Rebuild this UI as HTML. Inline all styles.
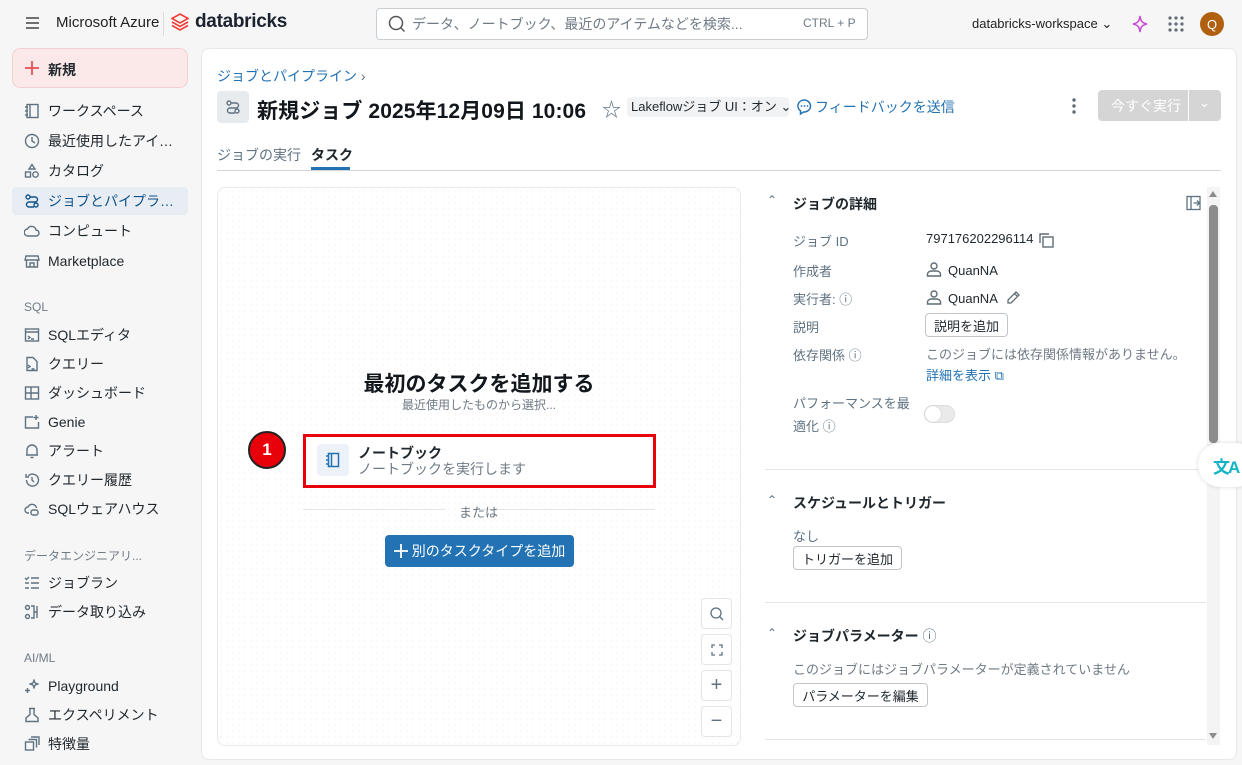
<!DOCTYPE html>
<html><head><meta charset="utf-8"><style>
*{box-sizing:border-box;margin:0;padding:0}
body{width:1242px;height:765px;overflow:hidden;background:#f6f6f6;font-family:"Liberation Sans","Noto Sans CJK JP",sans-serif;color:#1f272d;font-size:14px;position:relative}
.a{position:absolute;white-space:nowrap}
.nav{position:absolute;left:12px;width:176px;height:28px;display:flex;align-items:center;padding-left:12px;font-size:14px;white-space:nowrap}
.nav span{overflow:hidden;text-overflow:ellipsis;white-space:nowrap;max-width:128px}
.nav svg{width:16px;height:16px;margin-right:8px;flex:none;stroke:#5f7281;fill:none;stroke-width:1.4}
.lbl{position:absolute;left:24px;font-size:12px;color:#6f7a85}
.btn{position:absolute;border:1px solid #c0c5ca;border-radius:4px;background:#fff;font-size:13px;display:flex;align-items:center;justify-content:center}
.grey{color:#5f7281}
.ctl{position:absolute;left:701px;width:31px;height:31px;border:1px solid #e3e6e9;border-radius:4px;background:#fff;display:flex;align-items:center;justify-content:center;color:#5f7281}
</style></head><body>
<!-- top bar -->
<svg class="a" style="left:25px;top:16px" width="15" height="14"><path d="M1 2h13M1 7h13M1 12h13" stroke="#444" stroke-width="1.5"/></svg>
<div class="a" style="left:56px;top:14px;font-size:15px;color:#222">Microsoft Azure</div>
<div class="a" style="left:163px;top:12px;width:1px;height:24px;background:#ddd"></div>
<svg class="a" style="left:171px;top:13px" width="18" height="20" viewBox="0 0 18 20"><path d="M9 1L17 5.5 9 10 1 5.5zM1 9l8 4.5 8-4.5M1 12.5l8 4.5 8-4.5" fill="none" stroke="#ef3e36" stroke-width="1.6"/></svg>
<div class="a" style="left:195px;top:11px;font-size:19px;font-weight:bold;color:#1b2331;letter-spacing:-0.3px">databricks</div>
<div class="a" style="left:376px;top:8px;width:492px;height:32px;border:1px solid #c8cdd2;border-radius:4px;background:#fff"></div>
<svg class="a" style="left:388px;top:15px" width="18" height="18"><circle cx="8" cy="8" r="6.5" fill="none" stroke="#555" stroke-width="1.5"/><path d="M12.5 12.5L16.5 16.5" stroke="#555" stroke-width="1.5"/></svg>
<div class="a" style="left:412px;top:14px;font-size:14px;color:#6f7a85">データ、ノートブック、最近のアイテムなどを検索...</div>
<div class="a" style="left:803px;top:16px;font-size:12px;color:#6f7a85">CTRL + P</div>
<div class="a" style="left:972px;top:16px;font-size:13px;color:#222">databricks-workspace ⌄</div>
<svg class="a" style="left:1132px;top:15px" width="16" height="18"><path d="M8 1C8.6 6 10 8 15 9 10 10 8.6 12 8 17 7.4 12 6 10 1 9 6 8 7.4 6 8 1z" fill="none" stroke="#c94fd6" stroke-width="1.6"/></svg>
<svg class="a" style="left:1168px;top:16px" width="16" height="16" fill="#5f6b75"><circle cx="2" cy="2" r="1.6"/><circle cx="8" cy="2" r="1.6"/><circle cx="14" cy="2" r="1.6"/><circle cx="2" cy="8" r="1.6"/><circle cx="8" cy="8" r="1.6"/><circle cx="14" cy="8" r="1.6"/><circle cx="2" cy="14" r="1.6"/><circle cx="8" cy="14" r="1.6"/><circle cx="14" cy="14" r="1.6"/></svg>
<div class="a" style="left:1200px;top:12px;width:24px;height:24px;border-radius:50%;background:#b0600f;color:#fff;font-size:13px;display:flex;align-items:center;justify-content:center">Q</div>

<!-- sidebar -->
<div class="a" style="left:12px;top:48px;width:176px;height:40px;background:#fbe9e9;border:1px solid #f4cfcf;border-radius:8px"></div>
<svg class="a" style="left:24px;top:60px" width="16" height="16"><path d="M8 1v14M1 8h14" stroke="#e34c4c" stroke-width="1.7"/></svg>
<div class="a" style="left:48px;top:60px;font-size:14px;font-weight:bold">新規</div>
<div class="nav" style="top:97px"><svg viewBox="0 0 16 16"><rect x="3" y="1.5" width="11" height="13"/><path d="M6 1.5v13M1 4h3M1 8h3M1 12h3"/></svg><span>ワークスペース</span></div>
<div class="nav" style="top:127px"><svg viewBox="0 0 16 16"><circle cx="8" cy="8" r="6.5"/><path d="M8 4v4l3 2"/></svg><span>最近使用したアイテム</span></div>
<div class="nav" style="top:157px"><svg viewBox="0 0 16 16"><path d="M8 1.5l3 4.5H5z"/><rect x="1.5" y="9" width="5" height="5"/><circle cx="11.5" cy="11.5" r="2.7"/></svg><span>カタログ</span></div>
<div class="nav" style="top:187px;background:#e8ecf3;border-radius:4px;color:#0e538b"><svg viewBox="0 0 16 16" style="stroke:#0e538b"><circle cx="4" cy="4" r="2"/><circle cx="12" cy="12" r="2"/><path d="M6 4h5a2.5 2.5 0 010 5H5a2.5 2.5 0 000 5h5"/></svg><span>ジョブとパイプライン</span></div>
<div class="nav" style="top:217px"><svg viewBox="0 0 16 16"><path d="M4 13h8a3 3 0 000-6 4.5 4.5 0 00-8.5-1A3.5 3.5 0 004 13z"/></svg><span>コンピュート</span></div>
<div class="nav" style="top:247px"><svg viewBox="0 0 16 16"><path d="M2 3h12l1 4H1zM2.5 7v7h11V7M6 14v-4h4v4"/></svg><span>Marketplace</span></div>
<div class="lbl" style="top:300px">SQL</div>
<div class="nav" style="top:321px"><svg viewBox="0 0 16 16"><rect x="1.5" y="2" width="13" height="12"/><path d="M1.5 5h13M4 9l2 1.5-2 1.5M7 12h3"/></svg><span>SQLエディタ</span></div>
<div class="nav" style="top:350px"><svg viewBox="0 0 16 16"><path d="M9 1.5H3v13h10V5.5zM4 9l2 1.5L4 12M7.5 13h3"/></svg><span>クエリー</span></div>
<div class="nav" style="top:379px"><svg viewBox="0 0 16 16"><rect x="1.5" y="2" width="13" height="12"/><path d="M7 2v12M7 8h7.5M1.5 8h5.5"/></svg><span>ダッシュボード</span></div>
<div class="nav" style="top:408px"><svg viewBox="0 0 16 16"><path d="M9 3H1.5v11h13V8M12 1v5M9.5 3.5h5"/></svg><span>Genie</span></div>
<div class="nav" style="top:437px"><svg viewBox="0 0 16 16"><path d="M3 12V7a5 5 0 0110 0v5H2h12M6.5 14.5h3"/></svg><span>アラート</span></div>
<div class="nav" style="top:466px"><svg viewBox="0 0 16 16"><path d="M2.5 8a6 6 0 101.8-4.2M2 2v3h3M8 5v3l2 2"/></svg><span>クエリー履歴</span></div>
<div class="nav" style="top:495px"><svg viewBox="0 0 16 16"><path d="M5 12H4a3 3 0 010-6 4.5 4.5 0 018.5 1"/><rect x="7" y="9" width="7" height="5" rx="2"/></svg><span>SQLウェアハウス</span></div>
<div class="lbl" style="top:547px">データエンジニアリ...</div>
<div class="nav" style="top:569px"><svg viewBox="0 0 16 16"><path d="M7 3h8M7 8h8M7 13h8M1 3l1.5 1.5L5 2M1 8h4M1 13h4"/></svg><span>ジョブラン</span></div>
<div class="nav" style="top:598px"><svg viewBox="0 0 16 16"><circle cx="3.5" cy="3.5" r="2"/><circle cx="3.5" cy="12.5" r="2"/><path d="M7 2h3v12H7M13 2v12M10 8h3"/></svg><span>データ取り込み</span></div>
<div class="lbl" style="top:651px">AI/ML</div>
<div class="nav" style="top:672px"><svg viewBox="0 0 16 16"><path d="M10 1.5C10.5 5 11 5.5 14.5 6 11 6.5 10.5 7 10 10.5 9.5 7 9 6.5 5.5 6 9 5.5 9.5 5 10 1.5zM3.5 10v5M1 12.5h5"/></svg><span>Playground</span></div>
<div class="nav" style="top:701px"><svg viewBox="0 0 16 16"><path d="M5 1.5h6M6 1.5v6L2 11v3.5h12V11l-4-3.5v-6"/></svg><span>エクスペリメント</span></div>
<div class="nav" style="top:730px"><svg viewBox="0 0 16 16"><rect x="1.5" y="6" width="8" height="8"/><path d="M4.5 3.5h8v8M7 1h8v8"/></svg><span>特徴量</span></div>

<!-- main panel -->
<div class="a" style="left:201px;top:48px;width:1036px;height:712px;background:#fff;border:1px solid #e6e8ea;border-radius:8px"></div>
<div class="a" style="left:217px;top:66px;font-size:14px;color:#2272b4">ジョブとパイプライン <span style="color:#5f7281">›</span></div>
<div class="a" style="left:217px;top:91px;width:32px;height:32px;background:#e8ebee;border-radius:4px"></div>
<svg class="a" style="left:225px;top:99px" width="16" height="16" viewBox="0 0 16 16" fill="none" stroke="#5f7281" stroke-width="1.4"><circle cx="4" cy="4" r="2"/><circle cx="12" cy="12" r="2"/><path d="M6 4h5a2.5 2.5 0 010 5H5a2.5 2.5 0 000 5h5"/></svg>
<div class="a" style="left:257px;top:95px;font-size:21px;font-weight:bold;color:#11171c;letter-spacing:0.1px">新規ジョブ 2025年12月09日 10:06</div>
<div class="a" style="left:602px;top:95px;font-size:19px;color:#5f7281">☆</div>
<div class="a" style="left:627px;top:97px;width:162px;height:20px;background:#f0f2f4;border-radius:4px;font-size:13px;padding-left:4px;line-height:20px">Lakeflowジョブ UI：オン ⌄</div>
<svg class="a" style="left:796px;top:98px" width="17" height="18"><path d="M8.5 2a6.5 6 0 00-4 10.8V16l3-2a6.5 6 0 101-12z" fill="none" stroke="#2272b4" stroke-width="1.5"/><circle cx="5.5" cy="8" r=".9" fill="#2272b4"/><circle cx="8.5" cy="8" r=".9" fill="#2272b4"/><circle cx="11.5" cy="8" r=".9" fill="#2272b4"/></svg>
<div class="a" style="left:815px;top:97px;font-size:14px;color:#2272b4">フィードバックを送信</div>
<svg class="a" style="left:1071px;top:97px" width="6" height="18" fill="#5f6b75"><circle cx="3" cy="3" r="1.7"/><circle cx="3" cy="9" r="1.7"/><circle cx="3" cy="15" r="1.7"/></svg>
<div class="a" style="left:1098px;top:90px;width:123px;height:31px;background:#d5d5d5;border-radius:4px"></div>
<div class="a" style="left:1188px;top:90px;width:1px;height:31px;background:#fff"></div>
<div class="a" style="left:1111px;top:96px;font-size:14px;color:#fff">今すぐ実行</div>
<div class="a" style="left:1199px;top:95px;font-size:13px;color:#fff">⌄</div>
<div class="a" style="left:217px;top:145px;font-size:14px;color:#5f7281">ジョブの実行</div>
<div class="a" style="left:311px;top:145px;font-size:14px;font-weight:bold">タスク</div>
<div class="a" style="left:311px;top:167px;width:39px;height:3px;background:#2272b4"></div>
<div class="a" style="left:217px;top:170px;width:1004px;height:1px;background:#d1d5d9"></div>

<!-- canvas -->
<div class="a" style="left:217px;top:187px;width:524px;height:559px;border:1px solid #e8eaec;border-radius:8px;background-color:#fff;background-image:radial-gradient(#ececee 0.7px,transparent 0.8px);background-size:6px 6px"></div>
<div class="a" style="left:217px;top:368px;width:524px;text-align:center;font-size:21px;font-weight:bold;color:#11171c">最初のタスクを追加する</div>
<div class="a" style="left:217px;top:396px;width:524px;text-align:center;font-size:12px;color:#6f7a85">最近使用したものから選択...</div>
<div class="a" style="left:303px;top:434px;width:353px;height:54px;border:3px solid #e8000b;background:#fff"></div>
<div class="a" style="left:248px;top:431px;width:38px;height:38px;border-radius:50%;background:#e8000b;border:2px solid #222;color:#fff;font-weight:bold;font-size:17px;display:flex;align-items:center;justify-content:center">1</div>
<div class="a" style="left:317px;top:444px;width:32px;height:32px;background:#edf2f8;border-radius:4px"></div>
<svg class="a" style="left:325px;top:452px" width="16" height="16" viewBox="0 0 16 16" fill="none" stroke="#2272b4" stroke-width="1.5"><rect x="3.5" y="1.5" width="10" height="13"/><path d="M6.5 1.5v13M1 4h3M1 8h3M1 12h3"/></svg>
<div class="a" style="left:358px;top:443px;font-size:14px;font-weight:bold">ノートブック</div>
<div class="a" style="left:358px;top:459px;font-size:14px;color:#6f7a85">ノートブックを実行します</div>
<div class="a" style="left:303px;top:509px;width:142px;height:1px;background:#e3e6e9"></div>
<div class="a" style="left:475px;top:509px;width:180px;height:1px;background:#e3e6e9"></div>
<div class="a" style="left:459px;top:502px;font-size:13px;color:#6f7a85">または</div>
<div class="a" style="left:385px;top:535px;width:189px;height:32px;background:#2272b4;border-radius:4px;color:#fff;font-size:14px;display:flex;align-items:center;justify-content:center"><svg width="14" height="14" style="margin-right:4px"><path d="M7 0v14M0 7h14" stroke="#fff" stroke-width="1.8"/></svg>別のタスクタイプを追加</div>
<div class="ctl" style="top:598px"><svg width="14" height="14"><circle cx="6" cy="6" r="5" fill="none" stroke="#5f7281" stroke-width="1.3"/><path d="M9.5 9.5L13 13" stroke="#5f7281" stroke-width="1.3"/></svg></div>
<div class="ctl" style="top:634px"><svg width="12" height="12" fill="none" stroke="#5f7281" stroke-width="1.3"><path d="M1 4V1h3M8 1h3v3M11 8v3H8M4 11H1V8"/></svg></div>
<div class="ctl" style="top:670px;font-size:20px">+</div>
<div class="ctl" style="top:706px;font-size:20px">−</div>

<!-- right panel -->
<div class="a" style="left:767px;top:193px;font-size:12px;color:#5f7281">⌃</div>
<div class="a" style="left:793px;top:194px;font-size:14px;font-weight:bold">ジョブの詳細</div>
<svg class="a" style="left:1186px;top:195px" width="16" height="16" fill="none" stroke="#5f7281" stroke-width="1.3"><rect x="1" y="1.5" width="13" height="13"/><path d="M5 1.5v13M7.5 8h6M11 5.5l2.5 2.5-2.5 2.5"/></svg>
<div class="a grey" style="left:793px;top:231px;font-size:13px">ジョブ ID</div>
<div class="a" style="left:926px;top:231px;font-size:13px">797176202296114</div>
<svg class="a" style="left:1039px;top:233px" width="15" height="15" fill="none" stroke="#5f6b75" stroke-width="1.4"><path d="M1 10V1h9"/><rect x="4" y="4" width="10" height="10"/></svg>
<div class="a grey" style="left:793px;top:261px;font-size:13px">作成者</div>
<svg class="a" style="left:926px;top:261px" width="16" height="16" fill="none" stroke="#5f6b75" stroke-width="1.4"><circle cx="8" cy="5" r="3"/><path d="M1.5 15v-2a4 3 0 014-3h5a4 3 0 014 3v2z"/></svg>
<div class="a" style="left:948px;top:263px;font-size:13px">QuanNA</div>
<div class="a grey" style="left:793px;top:289px;font-size:13px">実行者: ⓘ</div>
<svg class="a" style="left:926px;top:289px" width="16" height="16" fill="none" stroke="#5f6b75" stroke-width="1.4"><circle cx="8" cy="5" r="3"/><path d="M1.5 15v-2a4 3 0 014-3h5a4 3 0 014 3v2z"/></svg>
<div class="a" style="left:948px;top:291px;font-size:13px">QuanNA</div>
<svg class="a" style="left:1006px;top:290px" width="15" height="15" fill="none" stroke="#5f6b75" stroke-width="1.3"><path d="M10 2l3 3-8 8H2v-3zM8.5 3.5l3 3"/></svg>
<div class="a grey" style="left:793px;top:317px;font-size:13px">説明</div>
<div class="btn" style="left:925px;top:313px;width:83px;height:24px">説明を追加</div>
<div class="a grey" style="left:793px;top:345px;font-size:13px">依存関係 ⓘ</div>
<div class="a" style="left:926px;top:344px;font-size:13px;color:#6f7a85">このジョブには依存関係情報がありません。</div>
<div class="a" style="left:926px;top:365px;font-size:13px;color:#2272b4">詳細を表示 ⧉</div>
<div class="a grey" style="left:793px;top:393px;font-size:13px">パフォーマンスを最</div>
<div class="a grey" style="left:793px;top:416px;font-size:13px">適化 ⓘ</div>
<div class="a" style="left:924px;top:405px;width:31px;height:18px;border-radius:9px;background:#eaeaea;border:1px solid #ddd"></div>
<div class="a" style="left:925px;top:406px;width:16px;height:16px;border-radius:50%;background:#fff;box-shadow:0 0 1px #999"></div>
<div class="a" style="left:765px;top:469px;width:441px;height:1px;background:#e3e6e9"></div>
<div class="a" style="left:767px;top:493px;font-size:12px;color:#5f7281">⌃</div>
<div class="a" style="left:793px;top:493px;font-size:14px;font-weight:bold">スケジュールとトリガー</div>
<div class="a grey" style="left:793px;top:526px;font-size:13px">なし</div>
<div class="btn" style="left:793px;top:546px;width:109px;height:24px">トリガーを追加</div>
<div class="a" style="left:765px;top:602px;width:441px;height:1px;background:#e3e6e9"></div>
<div class="a" style="left:767px;top:626px;font-size:12px;color:#5f7281">⌃</div>
<div class="a" style="left:793px;top:626px;font-size:14px;font-weight:bold">ジョブパラメーター <span style="font-weight:normal;color:#5f7281">ⓘ</span></div>
<div class="a grey" style="left:793px;top:659px;font-size:13px;color:#6f7a85">このジョブにはジョブパラメーターが定義されていません</div>
<div class="btn" style="left:793px;top:683px;width:135px;height:24px">パラメーターを編集</div>
<div class="a" style="left:765px;top:739px;width:441px;height:1px;background:#e3e6e9"></div>
<!-- scrollbar -->
<div class="a" style="left:1207px;top:187px;width:13px;height:558px;background:#f4f4f4"></div>
<div class="a" style="left:1209px;top:205px;width:9px;height:238px;background:#8c8c8c;border-radius:4px"></div>
<div class="a" style="left:1209px;top:191px;width:0;height:0;border-left:4px solid transparent;border-right:4px solid transparent;border-bottom:6px solid #8c8c8c"></div>
<div class="a" style="left:1209px;top:733px;width:0;height:0;border-left:4px solid transparent;border-right:4px solid transparent;border-top:6px solid #8c8c8c"></div>
<div class="a" style="left:1198px;top:443px;width:60px;height:44px;border-radius:22px;background:#fff;box-shadow:0 0 4px rgba(0,0,0,.15)"></div>
<div class="a" style="left:1213px;top:453px;font-size:17px;font-weight:bold;color:#12b3c4;letter-spacing:-2px">文A</div>
</body></html>
